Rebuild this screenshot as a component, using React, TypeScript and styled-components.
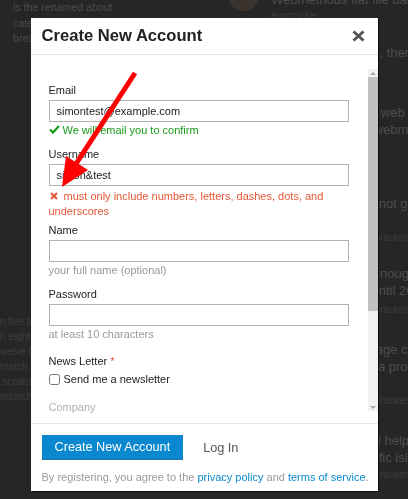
import styled, { createGlobalStyle } from 'styled-components';

const GlobalStyle = createGlobalStyle`
    html, body {
        margin: 0;
        padding: 0;
        background: #262626;
        font-family: "Liberation Sans", Arial, sans-serif;
        overflow: hidden;
    }
`;

const Page = styled.div`
    display: flex;
    width: 408px;
    height: 499px;
    overflow: hidden;
`;

const Sidebar = styled.div`
    width: 228px;
    display: flex;
    flex-direction: column;
    flex-shrink: 0;
`;

const SidebarText = styled.p`
    margin: 0 0 0 13px;
    font-size: 10.6px;
    line-height: 15.5px;
    color: #4b4b4b;
`;

const SidebarList = styled.ul`
    list-style: none;
    margin: 267px 0 0;
    padding: 0;
    font-size: 10px;
    line-height: 15px;
    color: #3e3e3e;
    white-space: nowrap;
`;

const TopicList = styled.div`
    display: flex;
    flex-direction: column;
    margin-top: -9px;
`;

const Topic = styled.div`
    display: flex;
    gap: 12px;
    margin-bottom: ${p => p.$gap ?? 20}px;
`;

const Avatar = styled.div`
    width: 31px;
    height: 31px;
    margin-top: -11px;
    border-radius: 50%;
    background: #3b332d;
    flex-shrink: 0;
    visibility: ${p => (p.$hidden ? 'hidden' : 'visible')};
`;

const TopicBody = styled.div`
    display: flex;
    flex-direction: column;
    white-space: nowrap;
`;

const TopicTitle = styled.div`
    font-size: 13px;
    line-height: 17px;
    color: #4d4d4d;
`;

const TopicMeta = styled.div`
    font-size: 10px;
    line-height: 16px;
    color: #3d3d3d;
    margin-top: ${p => p.$top ?? 0}px;
`;

const Overlay = styled.div`
    position: fixed;
    inset: 0;
    display: flex;
    justify-content: center;
    align-items: flex-start;
    padding-top: 18px;
`;

const Modal = styled.div`
    width: 347px;
    height: 473px;
    background: #fff;
    display: flex;
    flex-direction: column;
    box-shadow: 1px 1px 0 #0c0c0c;
`;

const Header = styled.div`
    height: 36px;
    display: flex;
    align-items: center;
    justify-content: space-between;
    padding: 0 13px 0 11px;
    border-bottom: 1px solid #e6e6e6;
    flex-shrink: 0;
`;

const Title = styled.h3`
    margin: 0;
    font-size: 16.6px;
    font-weight: 700;
    color: #222;
`;

const CloseButton = styled.button`
    background: transparent;
    border: none;
    padding: 0;
    display: flex;
    cursor: pointer;
`;

const Body = styled.div`
    display: flex;
    align-items: flex-start;
    padding-top: 14px;
    border-bottom: 1px solid #e9e9e9;
`;

const Scroller = styled.div`
    flex: 1;
    height: 354px;
    overflow: hidden;
    padding: 12px 0 0 18px;
    box-sizing: border-box;
`;

const ScrollTrack = styled.div`
    width: 10px;
    height: 342px;
    background: #f1f1f1;
    display: flex;
    flex-direction: column;
    align-items: center;
`;

const ScrollArrow = styled.div`
    height: 8px;
    display: flex;
    align-items: center;
    justify-content: center;
    &::before {
        content: '';
        border-left: 3px solid transparent;
        border-right: 3px solid transparent;
        ${p => (p.$down ? 'border-top: 3px solid #a8a8a8;' : 'border-bottom: 3px solid #a8a8a8;')}
    }
`;

const ScrollThumb = styled.div`
    width: 10px;
    height: 234px;
    background: #c1c1c1;
`;

const ScrollRest = styled.div`
    flex: 1;
`;

const Field = styled.div`
    display: flex;
    flex-direction: column;
    margin-bottom: ${p => p.$gap ?? 7}px;
`;

const Label = styled.label`
    font-size: 11px;
    line-height: 18px;
    color: ${p => (p.$faded ? '#b0b0b0' : '#222')};
    margin-bottom: 1px;
`;

const Required = styled.span`
    color: #e45735;
`;

const Input = styled.input`
    width: 300px;
    height: 22px;
    box-sizing: border-box;
    border: 1px solid #b2b2b2;
    padding: 0 7px;
    font-family: "Liberation Sans", Arial, sans-serif;
    font-size: 11px;
    color: #222;
    outline: none;
`;

const Hint = styled.div`
    font-size: 11px;
    line-height: ${p => (p.$tone === 'bad' ? 15 : 16)}px;
    margin-top: ${p => (p.$tone === 'bad' ? 3 : 0)}px;
    color: ${p => (p.$tone === 'good' ? '#1a9a1a' : p.$tone === 'bad' ? '#e45735' : '#999')};
    width: 300px;
`;

const CheckRow = styled.label`
    display: flex;
    align-items: center;
    gap: 4px;
    font-size: 11px;
    line-height: 16px;
    color: #222;
`;

const Checkbox = styled.input`
    margin: 0;
    width: 11px;
    height: 11px;
`;

const Footer = styled.div`
    padding: 11px 11px 0;
    display: flex;
    flex-direction: column;
    gap: 11px;
`;

const Actions = styled.div`
    display: flex;
    align-items: center;
    gap: 20px;
`;

const PrimaryButton = styled.button`
    height: 25px;
    padding: 0 13px;
    background: #0a88cf;
    border: none;
    border-bottom: 1px solid #2b6f9e;
    color: #fff;
    font-family: "Liberation Sans", Arial, sans-serif;
    font-size: 12.7px;
`;

const LinkButton = styled.button`
    background: transparent;
    border: none;
    padding: 0;
    color: #555;
    font-family: "Liberation Sans", Arial, sans-serif;
    font-size: 12.7px;
`;

const Terms = styled.p`
    margin: 0;
    font-size: 11px;
    color: #999;
    white-space: nowrap;
`;

const TermsLink = styled.a`
    color: #0a88cf;
    text-decoration: none;
`;

const ArrowSvg = styled.svg`
    position: fixed;
    left: 0;
    top: 0;
    pointer-events: none;
`;

const CheckIcon = () => (
    <svg width="11" height="9" viewBox="0 0 11 9" style={{ marginRight: 3 }}>
        <path d="M1 4.5 L4 7.5 L10 1" fill="none" stroke="#1a9a1a" strokeWidth="2.2" />
    </svg>
);

const CrossIcon = () => (
    <svg width="8" height="8" viewBox="0 0 8 8" style={{ margin: '0 6px 0 1px' }}>
        <path d="M1 1 L7 7 M7 1 L1 7" stroke="#e45735" strokeWidth="2" />
    </svg>
);

const meta = '3 replies \u00b7 9 views \u00b7 euroracker';

const topics = [
    { lines: ['Webmethods flat file data'], meta: 'euroracker', top: 0, gap: 20 },
    { lines: ['Convert the flat file, then parse it'], meta: '', top: 0, gap: 40 },
    { lines: ['Problems calling a web service', 'deployed into the webmethods server'], meta: '12 replies \u00b7 0 votes', top: 19, gap: 22 },
    { lines: ['Flow service does not get invoked'], meta, top: 18, gap: 19 },
    { lines: ['Disk space is not enough', 'on the old server until 2020'], meta, top: 3, gap: 23 },
    { lines: ['Clearing the message cache', 'whilst running it in a production'], meta, top: 18, gap: 23 },
    { lines: ['Searching for good help', 'info about the Pacific islands'], meta, top: 1, gap: 0 },
];

export default function App() {
    return (
        <>
            <GlobalStyle />
            <Page>
                <Sidebar>
                    <SidebarText>is the renamed about<br />category for the<br />breakfast club</SidebarText>
                    <SidebarList>
                        <li>n five tracks</li>
                        <li>h eight tracks</li>
                        <li>welve tracks</li>
                        <li>cratch file</li>
                        <li>&nbsp;scratch</li>
                        <li>scratch</li>
                    </SidebarList>
                </Sidebar>
                <TopicList>
                    {topics.map((t, i) => (
                        <Topic key={i} $gap={t.gap}>
                            <Avatar $hidden={i !== 0} />
                            <TopicBody>
                                {t.lines.map(line => (
                                    <TopicTitle key={line}>{line}</TopicTitle>
                                ))}
                                {t.meta && <TopicMeta $top={t.top}>{t.meta}</TopicMeta>}
                            </TopicBody>
                        </Topic>
                    ))}
                </TopicList>
            </Page>

            <Overlay>
                <Modal>
                    <Header>
                        <Title>Create New Account</Title>
                        <CloseButton aria-label="close">
                            <svg width="13" height="12" viewBox="0 0 13 12">
                                <path d="M1.5 1.5 L11.5 10.5 M11.5 1.5 L1.5 10.5" stroke="#555" strokeWidth="3" />
                            </svg>
                        </CloseButton>
                    </Header>
                    <Body>
                        <Scroller>
                            <Field>
                                <Label>Email</Label>
                                <Input defaultValue="simontest@example.com" />
                                <Hint $tone="good"><CheckIcon />We will email you to confirm</Hint>
                            </Field>
                            <Field $gap={2}>
                                <Label>Username</Label>
                                <Input defaultValue="simon&test" />
                                <Hint $tone="bad"><CrossIcon />must only include numbers, letters, dashes, dots, and underscores</Hint>
                            </Field>
                            <Field>
                                <Label>Name</Label>
                                <Input />
                                <Hint>your full name (optional)</Hint>
                            </Field>
                            <Field $gap={10}>
                                <Label>Password</Label>
                                <Input type="password" />
                                <Hint>at least 10 characters</Hint>
                            </Field>
                            <Field $gap={11}>
                                <Label>News Letter <Required>*</Required></Label>
                                <CheckRow><Checkbox type="checkbox" />Send me a newsletter</CheckRow>
                            </Field>
                            <Field>
                                <Label $faded>Company</Label>
                            </Field>
                        </Scroller>
                        <ScrollTrack>
                            <ScrollArrow />
                            <ScrollThumb />
                            <ScrollRest />
                            <ScrollArrow $down />
                        </ScrollTrack>
                    </Body>
                    <Footer>
                        <Actions>
                            <PrimaryButton>Create New Account</PrimaryButton>
                            <LinkButton>Log In</LinkButton>
                        </Actions>
                        <Terms>
                            By registering, you agree to the <TermsLink href="#">privacy policy</TermsLink> and <TermsLink href="#">terms of service</TermsLink>.
                        </Terms>
                    </Footer>
                </Modal>
            </Overlay>

            <ArrowSvg width="408" height="499" viewBox="0 0 408 499">
                <line x1="135" y1="73" x2="74" y2="167" stroke="#f00" strokeWidth="5" />
                <polygon points="62,187 66,156 88,170" fill="#f00" />
            </ArrowSvg>
        </>
    );
}
